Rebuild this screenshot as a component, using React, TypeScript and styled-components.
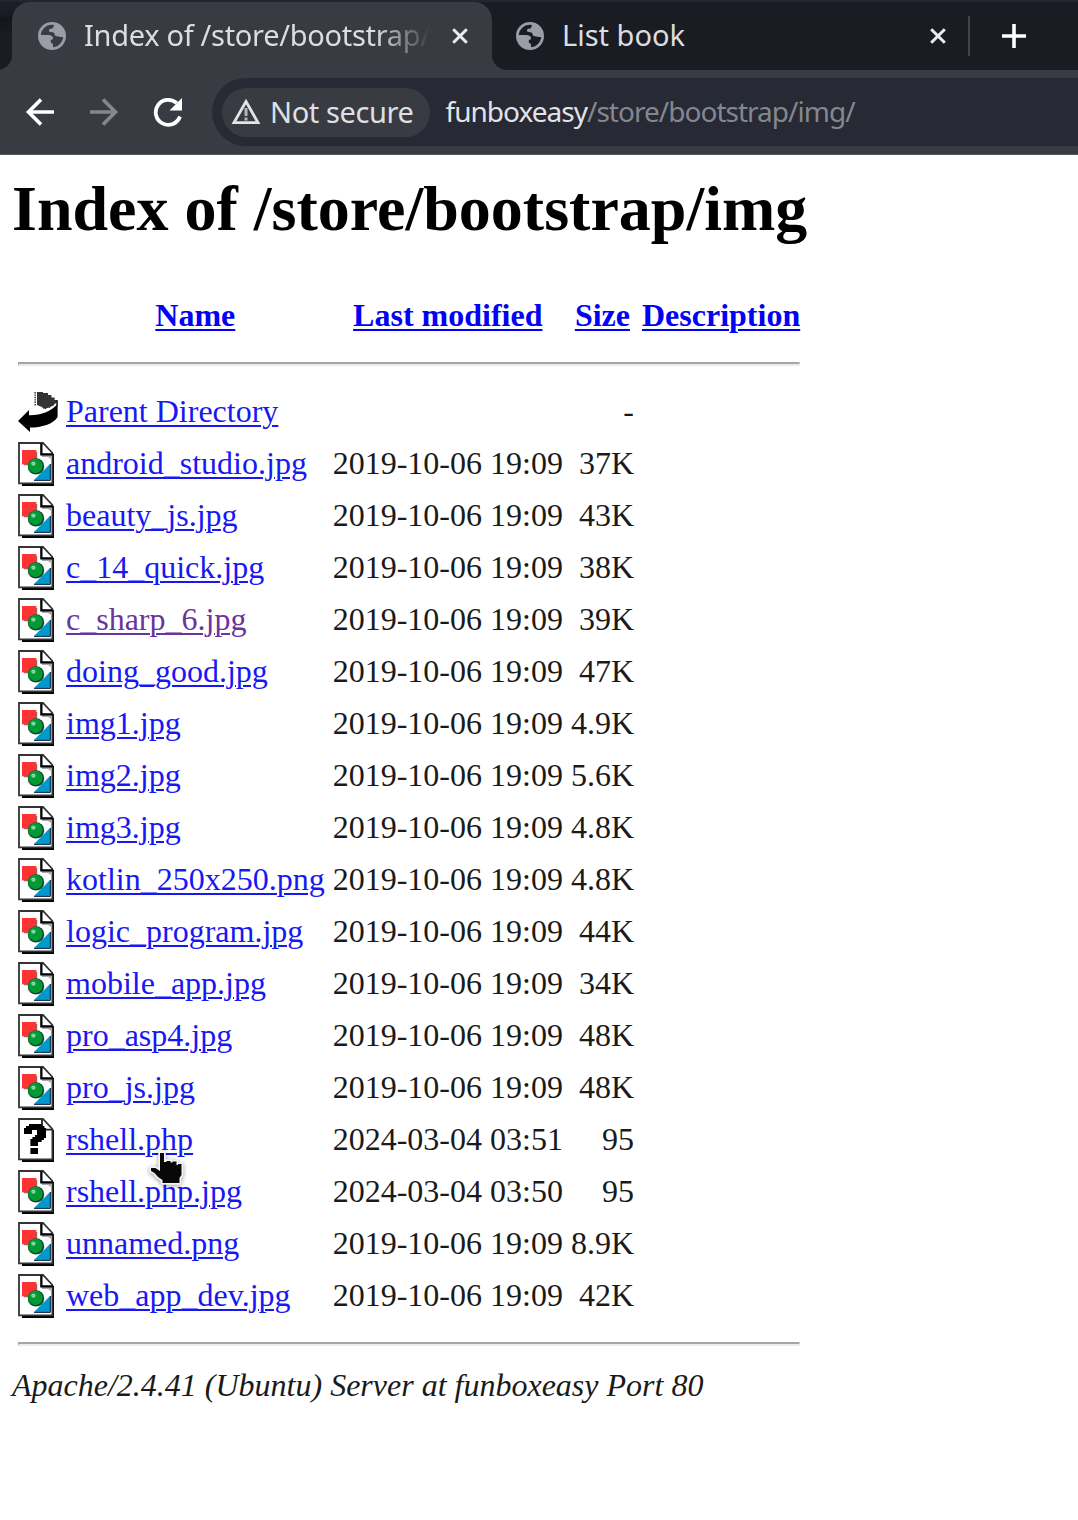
import React from 'react';
import styled, { createGlobalStyle } from 'styled-components';

const GlobalStyle = createGlobalStyle`
  body { margin: 0; background: #fff; overflow: hidden; }
`;

const Window = styled.div`
  position: relative;
  width: 1078px;
  height: 1520px;
  overflow: hidden;
  background: #fff;
`;

const Chrome = styled.header`
  height: 155px;
  box-sizing: border-box;
  background: #393b43;
  border-bottom: 1px solid #55565e;
  font-family: "Noto Sans", sans-serif;
`;

const TabStrip = styled.div`
  display: flex;
  height: 70px;
  box-sizing: border-box;
  padding-left: 12px;
  border-top: 2px solid #23242d;
  background: linear-gradient(170deg, #1b1e27 0 10px, #15161b 18px, #1a1c24 34px);
`;

const Tab = styled.div<{ $active?: boolean }>`
  position: relative;
  display: flex;
  align-items: center;
  box-sizing: border-box;
  width: ${p => (p.$active ? 480 : 476)}px;
  height: 68px;
  padding: 0 ${p => (p.$active ? 24 : 22)}px 0 ${p => (p.$active ? 26 : 24)}px;
  border-radius: 18px 18px 0 0;
  background: ${p => (p.$active ? '#393b43' : '#1a1c24')};
  ${p => p.$active && `
    &::before, &::after {
      content: '';
      position: absolute;
      bottom: 0;
      width: 15px;
      height: 15px;
    }
    &::before { left: -15px; background: radial-gradient(circle at 0 0, transparent 14.5px, #393b43 15.5px); }
    &::after { right: -15px; background: radial-gradient(circle at 100% 0, transparent 14.5px, #393b43 15.5px); z-index: 1; }
  `}
`;

const TabTitle = styled.span<{ $fade?: boolean; $spacing?: number }>`
  flex: 1;
  margin-left: 18px;
  padding-bottom: 2px;
  line-height: 40px;
  font-size: 29px;
  letter-spacing: ${p => p.$spacing || 0}px;
  white-space: nowrap;
  color: #dcdde0;
  ${p => p.$fade && 'mask-image: linear-gradient(90deg, #000 292px, transparent 346px);'}
`;

const Separator = styled.div`
  align-self: center;
  width: 2px;
  height: 40px;
  background: #43454c;
`;

const NewTab = styled.div`
  display: flex;
  align-items: center;
  padding-left: 32px;
`;

const Toolbar = styled.div`
  display: flex;
  align-items: center;
  height: 84px;
  padding-left: 24px;
`;

const NavIcons = styled.div`
  display: flex;
  gap: 32px;
  margin-right: 28px;
`;

const AddressBar = styled.div`
  display: flex;
  align-items: center;
  flex: 1;
  height: 68px;
  box-sizing: border-box;
  padding-left: 10px;
  border-radius: 34px 0 0 34px;
  background: #272934;
`;

const SecurityChip = styled.div`
  display: flex;
  align-items: center;
  box-sizing: border-box;
  width: 208px;
  height: 49px;
  padding-left: 9px;
  gap: 9px;
  border-radius: 25px;
  background: #393b43;
  color: #dfe0e3;
  font-size: 29px;
  letter-spacing: -0.4px;
  line-height: 38px;
  white-space: nowrap;
`;

const ChipLabel = styled.span`
  padding-bottom: 1px;
`;

const Url = styled.span`
  margin-left: 15.500px;
  padding-bottom: 2px;
  font-size: 28px;
  line-height: 40px;
  letter-spacing: -0.98px;
  color: #85878e;
  white-space: nowrap;
`;

const Host = styled.span`
  color: #e2e3e6;
`;

const Page = styled.main`
  padding: 17px 12px 16px;
  font-family: "Liberation Serif", serif;
  font-size: 32px;
  line-height: 37px;
  color: #1a1a1a;
`;

const Heading = styled.h1`
  margin: 0 0 42px;
  font-size: 64px;
  line-height: 74px;
  font-weight: bold;
  color: #000;
  white-space: nowrap;
`;

const Listing = styled.table`
  border-spacing: 4px;
  border-collapse: separate;
  font-size: 32px;
  white-space: nowrap;
`;

const Cell = styled.td`
  padding: 2px;
`;

const TextCell = styled.td<{ $align?: string }>`
  padding: 1px 2px 3px;
  text-align: ${p => p.$align || 'left'};
`;

const HeadCell = styled.th`
  padding: 1px 2px 3px;
  height: 44px;
`;

const Link = styled.a<{ $visited?: boolean }>`
  color: ${p => (p.$visited ? '#6a359b' : '#1818f2')};
  text-decoration: underline;
  text-decoration-thickness: 2px;
  text-underline-offset: 3px;

  th & { color: #0202f4; }
`;

const Rule = styled.hr`
  margin: 16px 0;
  height: 0;
  border: 2px solid;
  border-color: #a5a5a5 #ececec #ececec #a5a5a5;
  border-width: 2px 1px;
`;

const Signature = styled.address`
  margin-top: -1px;
  font-style: italic;
`;

const Pointer = styled.div`
  position: absolute;
  left: 144px;
  top: 1146px;
`;

const Svg = styled.svg`
  display: block;
  flex: none;
`;

const Globe = () => (
  <Svg width="28" height="28" viewBox="0 0 28 28">
    <circle cx="14" cy="14" r="12.600" fill="none" stroke="#9a9da6" strokeWidth="2.800" />
    <path fill="#9a9da6" d="M2 13h8c3.500 0 5 1.400 5 3.400 0 1-.8 1.400-2.200 1.400v2c0 1.200 1 2 2.200 2V26C8 27 1.500 21 2 13z" />
    <path fill="#9a9da6" d="M16 2c0 3-1 4.800-3 4.800-1.300 0-2 .6-2 1.600s.7 1.600 2 1.600c2.400 0 3.700 1 3.700 2.600 0 1.200.8 1.600 2 1.600 2.600 0 3 .9 4.700.9H26C27 9 22 2.500 16 2z" />
  </Svg>
);

const Close = () => (
  <Svg width="16" height="16" viewBox="0 0 16 16" stroke="#ececee" strokeWidth="3">
    <path d="M1.200 1.200 14.800 14.800M14.800 1.200 1.200 14.800" />
  </Svg>
);

const Arrow = ({ back }: { back?: boolean }) => (
  <Svg width="32" height="32" viewBox="0 0 32 32" fill="none" stroke={back ? '#fff' : '#85878c'} strokeWidth="3.600">
    <path d={back ? 'M30 16H5M17 3.500 4.500 16 17 28.500' : 'M2 16h25M15 3.500 27.500 16 15 28.500'} />
  </Svg>
);

const Reload = () => (
  <Svg width="32" height="32" viewBox="0 0 32 32">
    <path d="M28 20.500A12.500 12.500 0 1 1 24.800 7.200" fill="none" stroke="#fff" strokeWidth="3.800" />
    <path d="M30 2v12.500H17.500z" fill="#fff" />
  </Svg>
);

const Warning = () => (
  <Svg width="30" height="28" viewBox="0 0 30 28">
    <path d="M15 3.500 27 24.600H3z" fill="none" stroke="#e4e5e8" strokeWidth="2.800" />
    <path d="M15 10v8M15 19.500v3" stroke="#b4b5ba" strokeWidth="3" />
  </Svg>
);

const Sheet = ({ children }: { children: React.ReactNode }) => (
  <Svg width="40" height="44" viewBox="0 0 20 22">
    <path d="M2 20.500h14.500V6H18v16H2z" fill="#000" />
    <path d="M.5.5h12l4.700 5V20.700H.5z" fill="#fff" stroke="#333" strokeWidth=".9" />
    <path d="M12 6.500h5v2.200l-2-1.200h-3z" fill="#aaa" />
    <path d="M11.700.8v5.400h5.600" fill="none" stroke="#000" strokeWidth="1.200" />
    <path d="M12.400 1.500v4h3.800z" fill="#fff" />
    {children}
  </Svg>
);

const ImageIcon = () => (
  <Sheet>
    <path d="M3 11h6V5h.6v6.600H3z" fill="#777" />
    <path d="M2 4h7.200v7.200H2z" fill="#f33" />
    <path d="M8 19 16 11v8z" fill="#09c" />
    <path d="M8 19.200h8.200V11" fill="none" stroke="#024" strokeWidth=".5" />
    <circle cx="9" cy="12.200" r="4.100" fill="#143" />
    <circle cx="8.700" cy="11.900" r="3.600" fill="#093" />
    <circle cx="7.700" cy="10.800" r="1.100" fill="#7fd69a" />
  </Sheet>
);

const UnknownIcon = () => (
  <Svg width="40" height="44" viewBox="0 0 20 22">
    <path d="M2 20.500h14.500V6H18v16H2z" fill="#000" />
    <path d="M.5.5h12l4.700 5V20.700H.5z" fill="#fff" stroke="#333" strokeWidth=".9" />
    <path d="M12 1v3.500l1.500 1.300h3.700" fill="none" stroke="#222" strokeWidth=".9" />
    <path
      d="M3 8V5h1V4h1.500V3H12v1h1.200v1H14v5h-1v1h-1.200v1H10v2H6.200v-3.500h1V9.500h1.300v-1H9.500V6H7v2zM6.200 15H10v3H6.200z"
      fill="#000"
    />
  </Svg>
);

const BackIcon = () => (
  <Svg width="40" height="44" viewBox="0 0 20 22">
    <path d="M9.500 1h3v.5H15v1h1.700v1.200h1.600V5h1v1.500c-1 1.500-3.200 2.700-6.300 3.200l-1-1.200L9.500 7.500z" fill="#333" />
    <path d="M8.600 1v7" stroke="#444" strokeWidth=".8" strokeDasharray=".7 .5" />
    <path d="M0 15.500 5.500 10v2.600c6 .1 11.500-2 14.300-5.900V13.500c-2 3.500-8 5.300-13.800 5.300V21z" fill="#000" />
    <path d="M19.500 5v3" stroke="#111" strokeWidth=".8" />
    <path d="M12 9.900c3.200-.3 5.800-1.400 7.200-3.300" fill="none" stroke="#fff" strokeWidth=".8" strokeDasharray="1.500 .6" />
  </Svg>
);

const HandCursor = () => (
  <Svg width="46" height="46" viewBox="0 0 46 46" overflow="visible">
    <path
      d="M16 7h4v9h2.500v-1h4v1.500h2v-1h4V19h1.500v-1H37.500V29l-2 3v5H18.500v-3l-4.500-3-3.500-4-3.500-2v-3h4.500l4.500 3z"
      fill="#080808"
      stroke="#f4f4f4"
      strokeWidth="3.500"
      strokeLinejoin="round"
      paintOrder="stroke"
      style={{ filter: 'drop-shadow(0 1px 2px rgba(0,0,0,.4))' }}
    />
  </Svg>
);

const OLD = '2019-10-06 19:09';

const files: { name: string; date?: string; size: string; kind?: 'back' | 'unknown'; visited?: boolean }[] = [
  { name: 'Parent Directory', size: '-', kind: 'back' },
  { name: 'android_studio.jpg', date: OLD, size: '37K' },
  { name: 'beauty_js.jpg', date: OLD, size: '43K' },
  { name: 'c_14_quick.jpg', date: OLD, size: '38K' },
  { name: 'c_sharp_6.jpg', date: OLD, size: '39K', visited: true },
  { name: 'doing_good.jpg', date: OLD, size: '47K' },
  { name: 'img1.jpg', date: OLD, size: '4.9K' },
  { name: 'img2.jpg', date: OLD, size: '5.6K' },
  { name: 'img3.jpg', date: OLD, size: '4.8K' },
  { name: 'kotlin_250x250.png', date: OLD, size: '4.8K' },
  { name: 'logic_program.jpg', date: OLD, size: '44K' },
  { name: 'mobile_app.jpg', date: OLD, size: '34K' },
  { name: 'pro_asp4.jpg', date: OLD, size: '48K' },
  { name: 'pro_js.jpg', date: OLD, size: '48K' },
  { name: 'rshell.php', date: '2024-03-04 03:51', size: '95', kind: 'unknown' },
  { name: 'rshell.php.jpg', date: '2024-03-04 03:50', size: '95' },
  { name: 'unnamed.png', date: OLD, size: '8.9K' },
  { name: 'web_app_dev.jpg', date: OLD, size: '42K' },
];

const FileIcon = ({ kind }: { kind?: string }) =>
  kind === 'back' ? <BackIcon /> : kind === 'unknown' ? <UnknownIcon /> : <ImageIcon />;

export default function App() {
  return (
    <Window>
      <GlobalStyle />
      <Chrome>
        <TabStrip>
          <Tab $active>
            <Globe />
            <TabTitle $fade $spacing={-0.3}>Index of /store/bootstrap/</TabTitle>
            <Close />
          </Tab>
          <Tab>
            <Globe />
            <TabTitle $spacing={0}>List book</TabTitle>
            <Close />
          </Tab>
          <Separator />
          <NewTab>
            <Svg width="24" height="24" viewBox="0 0 24 24" stroke="#fff" strokeWidth="3.600">
              <path d="M12 0v24M0 12h24" />
            </Svg>
          </NewTab>
        </TabStrip>
        <Toolbar>
          <NavIcons>
            <Arrow back />
            <Arrow />
            <Reload />
          </NavIcons>
          <AddressBar>
            <SecurityChip>
              <Warning />
              <ChipLabel>Not secure</ChipLabel>
            </SecurityChip>
            <Url>
              <Host>funboxeasy</Host>/store/bootstrap/img/
            </Url>
          </AddressBar>
        </Toolbar>
      </Chrome>
      <Page>
        <Heading>Index of /store/bootstrap/img</Heading>
        <Listing>
          <tbody>
            <tr>
              <HeadCell />
              <HeadCell><Link href="#">Name</Link></HeadCell>
              <HeadCell><Link href="#">Last modified</Link></HeadCell>
              <HeadCell><Link href="#">Size</Link></HeadCell>
              <HeadCell><Link href="#">Description</Link></HeadCell>
            </tr>
            <tr>
              <Cell colSpan={5}><Rule /></Cell>
            </tr>
            {files.map(f => (
              <tr key={f.name}>
                <Cell><FileIcon kind={f.kind} /></Cell>
                <TextCell><Link href="#" $visited={f.visited}>{f.name}</Link></TextCell>
                <TextCell $align="right">{f.date}</TextCell>
                <TextCell $align="right">{f.size}</TextCell>
                <TextCell />
              </tr>
            ))}
            <tr>
              <Cell colSpan={5}><Rule /></Cell>
            </tr>
          </tbody>
        </Listing>
        <Signature>Apache/2.4.41 (Ubuntu) Server at funboxeasy Port 80</Signature>
      </Page>
      <Pointer><HandCursor /></Pointer>
    </Window>
  );
}
